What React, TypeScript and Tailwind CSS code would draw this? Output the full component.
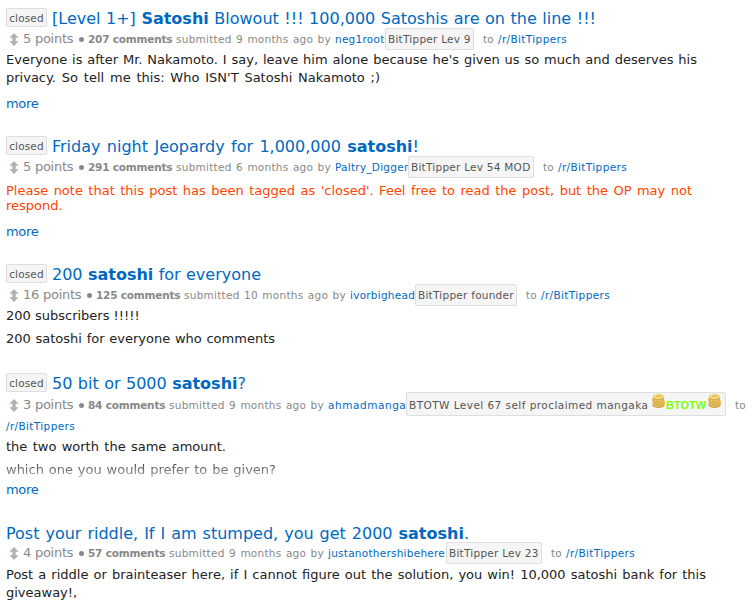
import type { ReactNode } from "react";

type PostProps = {
  closed?: boolean;
  title: ReactNode;
  titleClass: string;
  gap: string;
  meta: ReactNode;
  children: ReactNode;
};

const J = "[text-align-last:justify] whitespace-nowrap shrink-0 ";

function Arrow() {
  return (
    <svg className="ml-[3px] mr-[4px] shrink-0" width="10" height="13" viewBox="0 0 10 14">
      <path d="M5 0 L10 5 H6.8 V9 H10 L5 14 L0 9 H3.2 V5 H0 Z" fill="#b4b1aa" />
    </svg>
  );
}

function Coins() {
  return (
    <svg className="relative -top-[4px] shrink-0" width="15" height="16" viewBox="0 0 15 16">
      <ellipse cx="7.5" cy="12" rx="6.2" ry="3" fill="#cfa54a" />
      <ellipse cx="7.5" cy="10.8" rx="6.2" ry="2.8" fill="#e8c05a" />
      <ellipse cx="8" cy="9.6" rx="6" ry="2.7" fill="#d0a544" />
      <ellipse cx="8" cy="8.4" rx="6" ry="2.7" fill="#ebc662" />
      <ellipse cx="7" cy="7.2" rx="6" ry="2.7" fill="#d0a544" />
      <ellipse cx="7" cy="6" rx="6" ry="2.7" fill="#ebc662" />
      <ellipse cx="7.6" cy="4.8" rx="5.6" ry="2.7" fill="#d0a544" />
      <ellipse cx="7.6" cy="3.5" rx="5.6" ry="2.7" fill="#f3d880" />
      <path d="M5 3.6 Q7.6 2 10.2 3.6" stroke="#d9b24e" fill="none" />
    </svg>
  );
}

function Post({ closed, title, titleClass, gap, meta, children }: PostProps) {
  return (
    <article className={gap}>
      <h2 className="flex h-5 items-center text-[16px] leading-5 text-[#0069bf]">
        {closed && (
          <span className="mr-[5px] -mt-[3px] flex h-[19px] w-[41px] shrink-0 items-center justify-center rounded-[2px] border border-[#dedede] bg-[#f5f5f5] text-[10.5px] tracking-[0.15px] text-[#555]">
            closed
          </span>
        )}
        <span className={J + titleClass}>{title}</span>
      </h2>
      {meta}
      {children}
    </article>
  );
}

type MetaProps = {
  points: string;
  pointsClass: string;
  comments: string;
  commentsClass: string;
  time: string;
  timeClass: string;
  user: string;
  userClass: string;
  flair: ReactNode;
  flairClass: string;
  wrapped?: boolean;
};

function Meta(p: MetaProps) {
  return (
    <div className="flex h-[22px] items-center pb-[2px] text-[10.5px] leading-[22px] tracking-[0.25px] text-[#888]">
      <Arrow />
      <span className={J + "text-[13px] tracking-[-0.25px] " + p.pointsClass}>{p.points}</span>
      <span className="ml-[6px] h-[5px] w-[5px] shrink-0 rounded-full bg-[#888]" />
      <span className={J + "ml-[4px] font-bold tracking-[-0.2px] " + p.commentsClass}>{p.comments}</span>
      <span className={J + "ml-[4px] " + p.timeClass}>{p.time}</span>
      <span className={J + "ml-[4px] text-[#0069bf] " + p.userClass}>{p.user}</span>
      <span className={"flex shrink-0 items-center whitespace-nowrap rounded-[2px] border border-[#dedede] bg-[#f5f5f5] px-[2px] text-[#555] " + p.flairClass}>
        {p.flair}
      </span>
      <span className="ml-[9px] w-[11px] shrink-0">to</span>
      {!p.wrapped && <Sub className="ml-[4px]" />}
    </div>
  );
}

function Sub({ className }: { className?: string }) {
  return (
    <a className={"w-[69px] shrink-0 whitespace-nowrap text-[10.5px] tracking-[0.37px] text-[#0069bf] " + (className ?? "")}>
      /r/BitTippers
    </a>
  );
}

function More({ className }: { className: string }) {
  return <a className={"block text-[13px] leading-[18px] tracking-[-0.3px] text-[#0069bf] " + className}>more</a>;
}

function Line({ className, children }: { className: string; children: ReactNode }) {
  return <p className={J + "text-[13px] " + className}>{children}</p>;
}

export default function App() {
  return (
    <main className="h-[607px] w-[755px] overflow-hidden bg-white pl-[6px] pt-[9px] font-['DejaVu_Sans',sans-serif] text-[#222]">
      <Post
        closed
        gap=""
        titleClass="w-[544px]"
        title={<>[Level 1+] <b>Satoshi</b> Blowout !!! 100,000 Satoshis are on the line !!!</>}
        meta={
          <Meta
            points="5 points" pointsClass="w-[50px]"
            comments="207 comments" commentsClass="w-[84px]"
            time="submitted 9 months ago by" timeClass="w-[155px]"
            user="neg1root" userClass="w-[50px]"
            flair="BitTipper Lev 9" flairClass="h-[22px] w-[89px]"
          />
        }
      >
        <Line className="w-[691px] leading-[18px]">Everyone is after Mr. Nakamoto. I say, leave him alone because he's given us so much and deserves his</Line>
        <Line className="w-[374px] leading-[18px]">privacy. So tell me this: Who ISN'T Satoshi Nakamoto ;)</Line>
        <More className="mt-[8px]" />
      </Post>
      <Post
        closed
        gap="mt-6"
        titleClass="w-[367px]"
        title={<>Friday night Jeopardy for 1,000,000 <b>satoshi</b>!</>}
        meta={
          <Meta
            points="5 points" pointsClass="w-[50px]"
            comments="291 comments" commentsClass="w-[84px]"
            time="submitted 6 months ago by" timeClass="w-[155px]"
            user="Paltry_Digger" userClass="w-[73px]"
            flair="BitTipper Lev 54 MOD" flairClass="h-[22px] w-[126px]"
          />
        }
      >
        <div className="mt-[4px] text-[#ff4500]">
          <Line className="w-[686px] leading-[15px]">Please note that this post has been tagged as 'closed'. Feel free to read the post, but the OP may not</Line>
          <Line className="w-[57px] leading-[15px]">respond.</Line>
        </div>
        <More className="mt-[10px]" />
      </Post>
      <Post
        closed
        gap="mt-6"
        titleClass="w-[209px]"
        title={<>200 <b>satoshi</b> for everyone</>}
        meta={
          <Meta
            points="16 points" pointsClass="w-[58px]"
            comments="125 comments" commentsClass="w-[84px]"
            time="submitted 10 months ago by" timeClass="w-[162px]"
            user="ivorbighead" userClass="w-[65px]"
            flair="BitTipper founder" flairClass="h-[22px] w-[102px]"
          />
        }
      >
        <Line className="w-[133px] leading-[18px]">200 subscribers !!!!!</Line>
        <Line className="mt-[5px] w-[269px] leading-[18px]">200 satoshi for everyone who comments</Line>
      </Post>
      <Post
        closed
        gap="mt-[26px]"
        titleClass="w-[194px]"
        title={<>50 bit or 5000 <b>satoshi</b>?</>}
        meta={
          <div className="mt-px">
            <Meta
              wrapped
              points="3 points" pointsClass="w-[50px]"
              comments="84 comments" commentsClass="w-[77px]"
              time="submitted 9 months ago by" timeClass="w-[155px]"
              user="ahmadmanga" userClass="w-[78px] tracking-[0.55px]"
              flair={
                <>
                  <span className={J + "w-[238px] tracking-[0.45px]"}>BTOTW Level 67 self proclaimed mangaka</span>
                  <span className="w-[4px]" />
                  <Coins />
                  <b className={J + "w-[41px] font-['Liberation_Sans',sans-serif] text-[11px] tracking-[0px] text-[#7fff00]"}>BTOTW</b>
                  <Coins />
                </>
              }
              flairClass="-mt-[2px] h-6 w-[320px] pt-[2px]"
            />
            <div className="mt-px flex h-[18px] items-center"><Sub /></div>
          </div>
        }
      >
        <Line className="mt-[2px] w-[220px] leading-[18px]">the two worth the same amount.</Line>
        <Line className="mt-[5px] w-[270px] bg-gradient-to-b from-[#333] to-[#bbb] bg-clip-text leading-[18px] text-transparent">which one you would prefer to be given?</Line>
        <More className="mt-[2px]" />
      </Post>
      <Post
        gap="mt-[25px]"
        titleClass="w-[463px]"
        title={<>Post your riddle, If I am stumped, you get 2000 <b>satoshi</b>.</>}
        meta={
          <div className="-mt-px">
            <Meta
              points="4 points" pointsClass="w-[50px]"
              comments="57 comments" commentsClass="w-[77px]"
              time="submitted 9 months ago by" timeClass="w-[155px]"
              user="justanothershibehere" userClass="w-[118px]"
              flair="BitTipper Lev 23" flairClass="h-[22px] w-[96px]"
            />
          </div>
        }
      >
        <Line className="mt-px w-[700px] leading-[18px]">Post a riddle or brainteaser here, if I cannot figure out the solution, you win! 10,000 satoshi bank for this</Line>
        <Line className="w-[71px] leading-[18px]">giveaway!,</Line>
      </Post>
    </main>
  );
}
